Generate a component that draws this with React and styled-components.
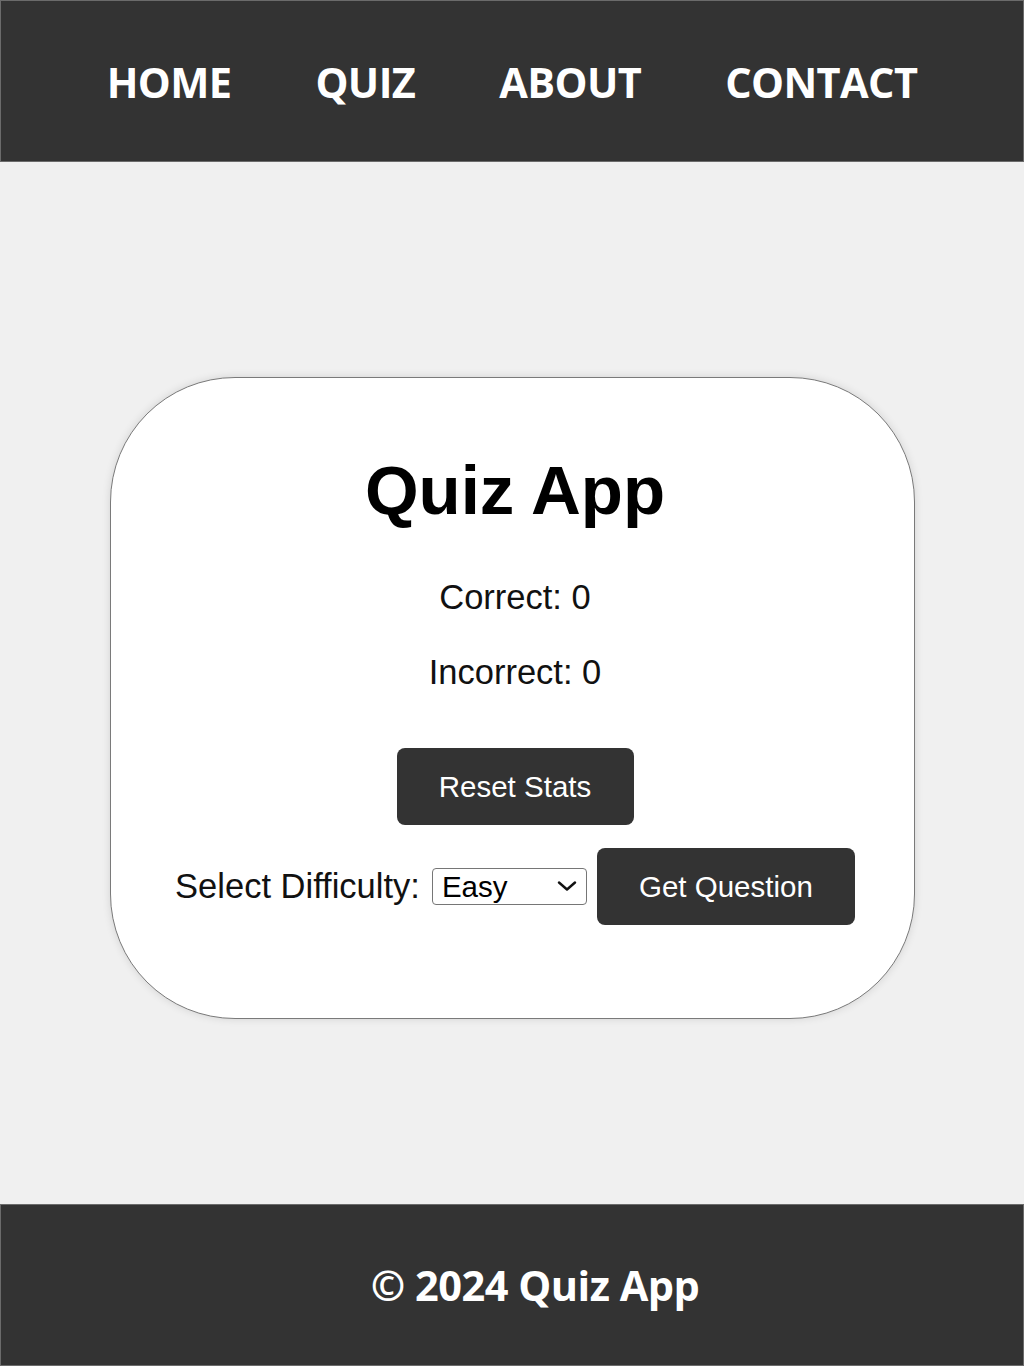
import React, { useState } from "react";
import styled, { createGlobalStyle } from "styled-components";

const GlobalStyle = createGlobalStyle`
  html, body { margin: 0; padding: 0; }
  body {
    background: #f0f0f0;
    font-family: "Liberation Sans", Arial, sans-serif;
  }
  * { box-sizing: border-box; }
`;

const Page = styled.div`
  display: flex;
  flex-direction: column;
  min-height: 1366px;
`;

const NavBar = styled.nav`
  height: 162px;
  background: #333333;
  border: 1px solid #6b6b6b;
  display: flex;
  align-items: center;
  justify-content: center;
  gap: 84px;
  padding-top: 2px;
`;

const NavLink = styled.a`
  color: #ffffff;
  text-decoration: none;
  font-family: "Open Sans", "Noto Sans", sans-serif;
  font-weight: 700;
  font-size: 41.5px;
  letter-spacing: -0.6px;
  cursor: pointer;
`;

const Main = styled.main`
  flex: 1;
  display: flex;
  justify-content: center;
  align-items: flex-start;
  padding-top: 215px;
`;

const Card = styled.section`
  width: 805px;
  height: 642px;
  background: #ffffff;
  border: 1px solid #7a7a7a;
  border-radius: 125px;
  box-shadow: 0 0 8px rgba(0, 0, 0, 0.12);
  display: flex;
  flex-direction: column;
  align-items: center;
  padding: 74px 0 0 6px;
`;

const Title = styled.h1`
  margin: 0;
  font-size: 69px;
  line-height: 78px;
  font-weight: 700;
  color: #000;
`;

const Stat = styled.p`
  margin: ${(p) => p.$mt}px 0 0;
  font-size: 34.5px;
  line-height: 38px;
  color: #111;
`;

const DarkButton = styled.button`
  background: #333333;
  color: #ffffff;
  border: none;
  border-radius: 8px;
  font-family: "Liberation Sans", Arial, sans-serif;
  font-size: 29.5px;
  height: 77px;
  padding: 0;
  cursor: pointer;
`;

const ResetButton = styled(DarkButton)`
  margin-top: 57px;
  width: 237px;
`;

const Row = styled.div`
  margin-top: 23px;
  display: flex;
  align-items: center;
  gap: 10px;
`;

const Label = styled.label`
  font-size: 34.5px;
  color: #111;
  margin-right: 2px;
`;

const SelectWrap = styled.div`
  position: relative;
  display: flex;
`;

const Select = styled.select`
  appearance: none;
  -webkit-appearance: none;
  width: 155px;
  height: 37px;
  font-family: "Liberation Sans", Arial, sans-serif;
  font-size: 29.5px;
  color: #000;
  background: #fff;
  border: 1px solid #767676;
  border-radius: 4px;
  padding: 0 36px 0 9px;
  line-height: 35px;
`;

const Chevron = styled.svg`
  position: absolute;
  right: 10px;
  top: 13px;
  width: 20px;
  height: 10px;
  pointer-events: none;
`;

const QuestionButton = styled(DarkButton)`
  width: 258px;
`;

const Footer = styled.footer`
  height: 162px;
  background: #333333;
  border: 1px solid #6b6b6b;
  display: flex;
  align-items: center;
  justify-content: center;
  padding-left: 46px;
  color: #ffffff;
  font-family: "Open Sans", "Noto Sans", sans-serif;
  font-weight: 700;
  font-size: 41.5px;
  letter-spacing: -0.5px;
`;

export default function App() {
  const [correct, setCorrect] = useState(0);
  const [incorrect, setIncorrect] = useState(0);
  const [difficulty, setDifficulty] = useState("easy");

  return (
    <Page>
      <GlobalStyle />
      <NavBar>
        <NavLink>HOME</NavLink>
        <NavLink>QUIZ</NavLink>
        <NavLink>ABOUT</NavLink>
        <NavLink>CONTACT</NavLink>
      </NavBar>
      <Main>
        <Card>
          <Title>Quiz App</Title>
          <Stat $mt={48}>Correct: {correct}</Stat>
          <Stat $mt={37}>Incorrect: {incorrect}</Stat>
          <ResetButton
            onClick={() => {
              setCorrect(0);
              setIncorrect(0);
            }}
          >
            Reset Stats
          </ResetButton>
          <Row>
            <Label htmlFor="difficulty">Select Difficulty:</Label>
            <SelectWrap>
              <Select
                id="difficulty"
                value={difficulty}
                onChange={(e) => setDifficulty(e.target.value)}
              >
                <option value="easy">Easy</option>
                <option value="medium">Medium</option>
                <option value="hard">Hard</option>
              </Select>
              <Chevron viewBox="0 0 20 10" fill="none">
                <path
                  d="M2 1.5 L10 8.5 L18 1.5"
                  stroke="#111"
                  strokeWidth="2.4"
                  strokeLinecap="round"
                  strokeLinejoin="round"
                />
              </Chevron>
            </SelectWrap>
            <QuestionButton>Get Question</QuestionButton>
          </Row>
        </Card>
      </Main>
      <Footer>© 2024 Quiz App</Footer>
    </Page>
  );
}
